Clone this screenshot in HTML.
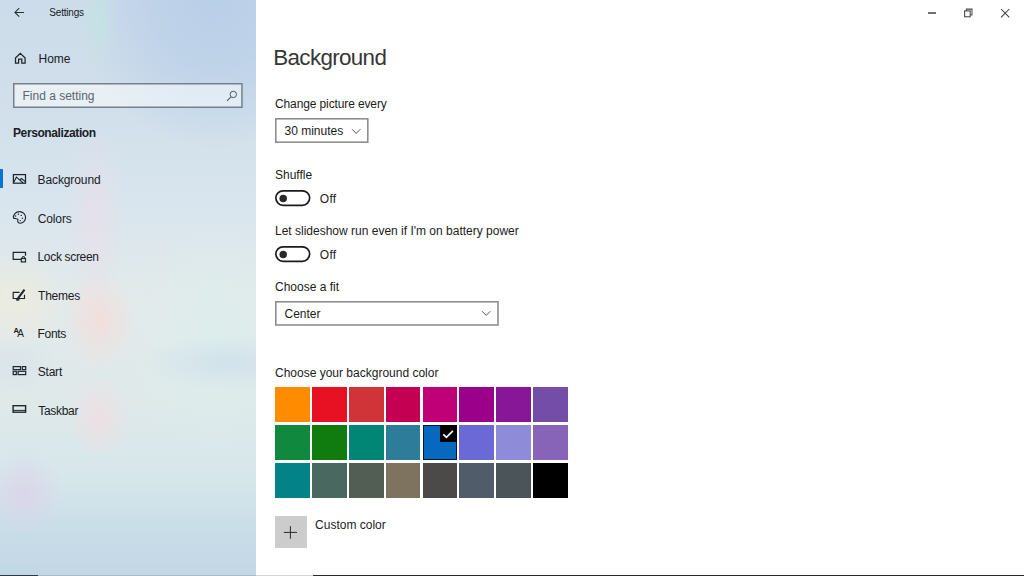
<!DOCTYPE html>
<html lang="en">
<head>
<meta charset="utf-8">
<title>Settings</title>
<style>
html,body{margin:0;padding:0;}
body{width:1024px;height:576px;overflow:hidden;background:#fff;position:relative;
  font-family:"Liberation Sans",sans-serif;font-size:12px;color:#1b1b1b;}
.abs{position:absolute;}
.t{position:absolute;white-space:nowrap;line-height:20px;height:20px;}
#side{position:absolute;left:0;top:0;width:256px;height:576px;overflow:hidden;
  background:
   radial-gradient(ellipse 20px 48px at 98px 20px, rgba(196,228,226,.8), rgba(196,228,226,0) 100%),
   radial-gradient(ellipse 135px 150px at 215px 0px, rgba(186,207,232,1), rgba(186,207,232,.75) 45%, rgba(186,207,232,0) 100%),
   radial-gradient(ellipse 30px 90px at 95px 215px, rgba(234,222,232,.75), rgba(234,222,232,0) 100%),
   radial-gradient(ellipse 36px 50px at 99px 320px, rgba(245,220,218,.85), rgba(245,220,218,0) 100%),
   radial-gradient(ellipse 32px 42px at 100px 418px, rgba(242,221,225,.8), rgba(242,221,225,0) 100%),
   radial-gradient(ellipse 40px 42px at 24px 492px, rgba(222,209,234,.8), rgba(222,209,234,0) 100%),
   radial-gradient(ellipse 90px 28px at 230px 363px, rgba(205,223,234,.8), rgba(205,223,234,0) 100%),
   radial-gradient(ellipse 85px 120px at 215px 340px, rgba(220,238,236,.95), rgba(220,238,236,0) 100%),
   radial-gradient(ellipse 50px 50px at 15px 300px, rgba(237,236,222,.95), rgba(237,236,222,0) 100%),
   radial-gradient(ellipse 45px 30px at 15px 365px, rgba(214,226,234,.7), rgba(214,226,234,0) 100%),
   linear-gradient(180deg,#ccdcea 0px,#d0dfea 100px,#d8e5ee 200px,#e3eaea 300px,#dfe9ea 400px,#d6e7eb 480px,#c9dde8 530px,#c2d6e5 576px);
}
#main{position:absolute;left:256px;top:0;width:768px;height:576px;background:#fff;}
.nav{color:#1a2026;}
.sel{position:absolute;border:1.4px solid #999;box-sizing:border-box;background:#fff;}
.tog{position:absolute;width:35.5px;height:15.7px;box-sizing:border-box;border:1.8px solid #1c1c1c;border-radius:8px;}
.tog i{position:absolute;left:2.5px;top:2.2px;width:7.8px;height:7.8px;border-radius:50%;background:#2a2a2a;}
.sw{position:absolute;width:34.8px;height:34.8px;}
svg{position:absolute;overflow:visible;}
</style>
</head>
<body>
<div id="side">
  <!-- back arrow -->
  <svg style="left:13px;top:7px" width="12" height="12" viewBox="0 0 12 12"><path d="M11 5.400H1.900M6.200 1.100 1.900 5.400l4.300 4.300" fill="none" stroke="#2a3036" stroke-width="1.050"/></svg>
  <div class="t nav" id="tSettings" style="left:49.300px;top:3.300px;font-size:10px;letter-spacing:-.2px;">Settings</div>

  <!-- home -->
  <svg style="left:14px;top:51.500px" width="13" height="13" viewBox="0 0 13 13"><path d="M1.200 6.200 6.300 1.300 11.400 6.200M1.500 5.900V11.100H4.600V7.100H7.800V11.100H11.100V5.900" fill="none" stroke="#1f262c" stroke-width="1.250" stroke-linejoin="miter"/></svg>
  <div class="t nav" id="tHome" style="left:38.500px;top:48.500px;">Home</div>

  <!-- search -->
  <svg style="left:13.000px;top:83.400px" width="229.700" height="25.000" viewBox="0 0 229.700 25.000"><rect x="0.750" y="0.750" width="228.200" height="23.500" fill="rgba(255,255,255,.5)" stroke="#74808b" stroke-width="1.5"/></svg>
  <div class="t" id="tFind" style="left:22.5px;top:86px;color:#5c6670;">Find a setting</div>
  <svg style="left:226px;top:90px" width="12" height="12" viewBox="0 0 12 12"><circle cx="7.3" cy="4.4" r="3.2" fill="none" stroke="#4d5963" stroke-width="1"/><path d="M5 6.8 1 10.8" stroke="#4d5963" stroke-width="1.1" fill="none"/></svg>

  <div class="t nav" id="tPers" style="left:13px;top:123.300px;font-weight:700;letter-spacing:-.4px;">Personalization</div>

  <!-- selected bar -->
  <div class="abs" style="left:0;top:169.300px;width:2.800px;height:18.800px;background:#0a74d6;"></div>

  <!-- Background icon -->
  <svg style="left:12px;top:173px" width="15" height="12" viewBox="0 0 15 12"><rect x="1.400" y="1.600" width="12.100" height="8.600" fill="none" stroke="#1f262c" stroke-width="1.250"/><path d="M1.800 9.200 4.400 4.200 11.200 10M7.600 7 9.600 5.500 13.300 8.600" fill="none" stroke="#1f262c" stroke-width="1.050"/></svg>
  <div class="t nav" id="tBg" style="left:37.500px;top:170.300px;letter-spacing:-.1px;">Background</div>

  <!-- Colors icon -->
  <svg style="left:12px;top:210px" width="15" height="15" viewBox="0 0 15 15"><path d="M1.500 8.100C.9 4.600 3.800 1.600 7.400 1.600 11 1.600 13.600 4.400 13.600 7.600 13.600 10.800 10.900 13.200 8.200 13.200 6.300 13.200 5.400 11.900 5.800 10.500 6.100 9.300 5.500 8.700 4.400 8.700Z" fill="none" stroke="#1f262c" stroke-width="1.150" stroke-linejoin="round"/><circle cx="3.600" cy="6" r=".7" fill="#1f262c"/><circle cx="6.400" cy="4.300" r=".7" fill="#1f262c"/><circle cx="9.300" cy="5.400" r=".7" fill="#1f262c"/><circle cx="10.400" cy="8.300" r=".7" fill="#1f262c"/><circle cx="8.300" cy="10.600" r=".7" fill="#1f262c"/></svg>
  <div class="t nav" id="tCol" style="left:37.800px;top:208.500px;letter-spacing:-.15px;">Colors</div>

  <!-- Lock screen icon -->
  <svg style="left:12px;top:251px" width="15" height="13" viewBox="0 0 15 13"><path d="M8.900 8.400H1.200V1.300H13.500V4.800" fill="none" stroke="#1f262c" stroke-width="1.250"/><rect x="9.300" y="7.500" width="4.200" height="3.400" fill="none" stroke="#1f262c" stroke-width="1.200"/><path d="M10.200 7.500V6.700a1.200 1.200 0 0 1 2.400 0v.8" fill="none" stroke="#1f262c" stroke-width="1.050"/></svg>
  <div class="t nav" id="tLock" style="left:37.500px;top:247px;letter-spacing:-.32px;">Lock screen</div>

  <!-- Themes icon -->
  <svg style="left:12px;top:288px" width="15" height="14" viewBox="0 0 15 14"><path d="M7.600 4.400H1.200V10.500H12.500V6.800" fill="none" stroke="#1f262c" stroke-width="1.200"/><path d="M12.500 1.700 5.400 11.200" fill="none" stroke="#1f262c" stroke-width="2.100"/><ellipse cx="5.700" cy="11.800" rx="2" ry=".9" fill="#1f262c"/></svg>
  <div class="t nav" id="tThemes" style="left:38.100px;top:285.600px;letter-spacing:-.25px;">Themes</div>

  <!-- Fonts icon -->
  <div class="t nav" style="left:13.500px;top:321.300px;font-size:7.500px;font-weight:700;">A</div>
  <div class="t nav" style="left:17.300px;top:324.300px;font-size:10px;font-weight:400;">A</div>
  <div class="t nav" id="tFonts" style="left:37.500px;top:323.900px;letter-spacing:-.3px;">Fonts</div>

  <!-- Start icon -->
  <svg style="left:12px;top:365px" width="15" height="12" viewBox="0 0 15 12"><g fill="none" stroke="#1f262c" stroke-width="1.200"><rect x="1.200" y="1.600" width="7.300" height="3"/><rect x="10.300" y="1.600" width="3.400" height="3"/><rect x="1.200" y="6.300" width="3.100" height="3.300"/><rect x="6.100" y="6.300" width="7.600" height="3.300"/></g></svg>
  <div class="t nav" id="tStart" style="left:37.700px;top:362.300px;letter-spacing:-.2px;">Start</div>

  <!-- Taskbar icon -->
  <svg style="left:12px;top:404px" width="15" height="10" viewBox="0 0 15 10"><rect x="1.100" y="1.700" width="12.500" height="6.500" fill="none" stroke="#1f262c" stroke-width="1.400"/><path d="M1.100 6.400H13.600" stroke="#1f262c" stroke-width="1"/></svg>
  <div class="t nav" id="tTask" style="left:38.200px;top:400.800px;letter-spacing:-.3px;">Taskbar</div>

  <div class="abs" style="left:0;top:574.500px;width:38px;height:2px;background:#2c3944;"></div>
  <div class="abs" style="left:38px;top:575px;width:218px;height:1px;background:#a9b9c3;"></div>
</div>

<div id="main">
  <!-- window controls -->
  <div class="abs" style="left:671.900px;top:12.100px;width:8.200px;height:1.600px;background:#707070;"></div>
  <svg style="left:707px;top:8px" width="11" height="11" viewBox="0 0 11 11"><path d="M3.400 2.900V1.100H9V7H7.200" fill="none" stroke="#4a4a4a" stroke-width="1.050"/><rect x="1.600" y="2.900" width="5.600" height="5.850" fill="none" stroke="#4a4a4a" stroke-width="1.100"/></svg>
  <svg style="left:744px;top:8px" width="11" height="11" viewBox="0 0 11 11"><path d="M1 1 9.300 9.300M9.300 1 1 9.300" fill="none" stroke="#3c3c3c" stroke-width="1.050"/></svg>

  <div class="t" id="tTitle" style="left:17.300px;top:41.600px;font-size:22.400px;line-height:32px;height:32px;letter-spacing:-.66px;color:#363636;">Background</div>

  <div class="t" id="tChange" style="left:19px;top:94.400px;letter-spacing:-.12px;">Change picture every</div>
  <svg style="left:19.000px;top:117.900px" width="93.600" height="25.000" viewBox="0 0 93.600 25.000"><rect x="0.800" y="0.800" width="92.000" height="23.400" fill="#fff" stroke="#8e8e8e" stroke-width="1.6"/></svg>
  <div class="t" id="t30" style="left:28.500px;top:120.500px;">30 minutes</div>
  <svg style="left:95px;top:128px" width="11" height="7" viewBox="0 0 11 7"><path d="M1 1.200 5.200 5.400 9.400 1.200" fill="none" stroke="#555" stroke-width="1"/></svg>

  <div class="t" id="tShuffle" style="left:19px;top:164.900px;">Shuffle</div>
  <svg style="left:19.100px;top:189.700px" width="35.5" height="16.2" viewBox="0 0 35.5 16.2"><rect x="0.850" y="0.850" width="33.800" height="14.500" rx="7.250" ry="7.250" fill="none" stroke="#1c1c1c" stroke-width="1.7"/><circle cx="8.200" cy="8.400" r="3.750" fill="#2a2a2a"/></svg>
  <div class="t" id="tOff1" style="left:63.800px;top:188.600px;letter-spacing:.3px;">Off</div>

  <div class="t" id="tLet" style="left:19px;top:220.900px;">Let slideshow run even if I'm on battery power</div>
  <svg style="left:19.100px;top:245.700px" width="35.5" height="16.2" viewBox="0 0 35.5 16.2"><rect x="0.850" y="0.850" width="33.800" height="14.500" rx="7.250" ry="7.250" fill="none" stroke="#1c1c1c" stroke-width="1.7"/><circle cx="8.200" cy="8.400" r="3.750" fill="#2a2a2a"/></svg>
  <div class="t" id="tOff2" style="left:63.800px;top:244.700px;letter-spacing:.3px;">Off</div>

  <div class="t" id="tFit" style="left:19px;top:277px;">Choose a fit</div>
  <svg style="left:19.000px;top:300.700px" width="223.800" height="24.800" viewBox="0 0 223.800 24.800"><rect x="0.800" y="0.800" width="222.200" height="23.200" fill="#fff" stroke="#8e8e8e" stroke-width="1.6"/></svg>
  <div class="t" id="tCenter" style="left:28.500px;top:303.500px;">Center</div>
  <svg style="left:224.800px;top:310px" width="11" height="7" viewBox="0 0 11 7"><path d="M1 1.200 5.200 5.400 9.400 1.200" fill="none" stroke="#555" stroke-width="1"/></svg>

  <div class="t" id="tChoose" style="left:19px;top:362.800px;">Choose your background color</div>

  <div id="grid">
  <div class="sw" style="left:19.300px;top:387.200px;background:#ff8c00"></div>
  <div class="sw" style="left:56.100px;top:387.200px;background:#e81123"></div>
  <div class="sw" style="left:92.900px;top:387.200px;background:#d13438"></div>
  <div class="sw" style="left:129.700px;top:387.200px;background:#c30052"></div>
  <div class="sw" style="left:166.500px;top:387.200px;background:#bf0077"></div>
  <div class="sw" style="left:203.300px;top:387.200px;background:#9a0089"></div>
  <div class="sw" style="left:240.100px;top:387.200px;background:#881798"></div>
  <div class="sw" style="left:276.900px;top:387.200px;background:#744da9"></div>

  <div class="sw" style="left:19.300px;top:424.800px;background:#10893e"></div>
  <div class="sw" style="left:56.100px;top:424.800px;background:#107c10"></div>
  <div class="sw" style="left:92.900px;top:424.800px;background:#018574"></div>
  <div class="sw" style="left:129.700px;top:424.800px;background:#2d7d9a"></div>
  <div class="sw" style="left:166.500px;top:424.800px;background:#0768bf;box-sizing:border-box;border:1.500px solid #04152c"></div>
  <div class="sw" style="left:203.300px;top:424.800px;background:#6b69d6"></div>
  <div class="sw" style="left:240.100px;top:424.800px;background:#8e8cd8"></div>
  <div class="sw" style="left:276.900px;top:424.800px;background:#8764b8"></div>

  <div class="sw" style="left:19.300px;top:463px;background:#038387"></div>
  <div class="sw" style="left:56.100px;top:463px;background:#486860"></div>
  <div class="sw" style="left:92.900px;top:463px;background:#525e54"></div>
  <div class="sw" style="left:129.700px;top:463px;background:#7e735f"></div>
  <div class="sw" style="left:166.500px;top:463px;background:#4c4a48"></div>
  <div class="sw" style="left:203.300px;top:463px;background:#515c6b"></div>
  <div class="sw" style="left:240.100px;top:463px;background:#4a5459"></div>
  <div class="sw" style="left:276.900px;top:463px;background:#000"></div>
  </div>
  <!-- check -->
  <div class="abs" style="left:184px;top:424.800px;width:17.200px;height:16.800px;background:#000;"></div>
  <svg style="left:186px;top:429px" width="12" height="10" viewBox="0 0 12 10"><path d="M1.300 5.300 4.400 8.300 10.900 1.900" fill="none" stroke="#fff" stroke-width="1.700"/></svg>

  <!-- custom color -->
  <div class="abs" style="left:19.100px;top:516.300px;width:32px;height:31.300px;background:#ccc;"></div>
  <svg style="left:27.200px;top:524.700px" width="15" height="15" viewBox="0 0 15 15"><path d="M7.400 1.200V13.800M.8 7.400H14" fill="none" stroke="#2a2a2a" stroke-width="1"/></svg>
  <div class="t" id="tCustom" style="left:59.100px;top:514.900px;">Custom color</div>

  <div class="abs" style="left:0;top:575px;width:57px;height:1px;background:#d5d5d5;"></div>
  <div class="abs" style="left:57px;top:574.600px;width:711px;height:1.400px;background:#2b2b2b;"></div>
</div>
</body>
</html>
